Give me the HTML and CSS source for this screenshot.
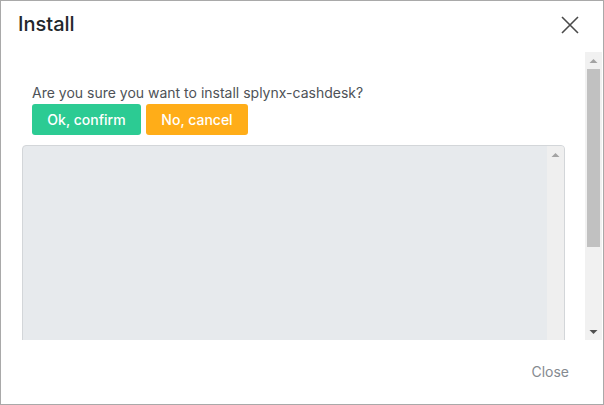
FILE: index.html
```html
<!DOCTYPE html>
<html>
<head>
<meta charset="utf-8">
<link rel="stylesheet" href="styles.css">
</head>
<body>
<div class="modal">
  <div class="modal-header">
    <h1 class="modal-title">Install</h1>
    <button class="close-x" aria-label="Close">
      <svg width="18" height="18" viewBox="0 0 18 18"><path d="M1 1 L17 17 M17 1 L1 17" stroke="#4a4a4a" stroke-width="1.6" fill="none"/></svg>
    </button>
  </div>
  <div class="modal-body">
    <div class="body-content">
      <div class="confirm">
        <p class="question">Are you sure you want to install splynx-cashdesk?</p>
        <div class="actions">
          <button class="btn btn-green">Ok, confirm</button>
          <button class="btn btn-orange">No, cancel</button>
        </div>
      </div>
      <div class="log">
        <div class="log-area"></div>
        <div class="vscroll vscroll-light">
          <div class="sb-btn"><svg width="9" height="6" viewBox="0 0 9 6"><path d="M0.5 5 L8.5 5 L4.5 1 Z" fill="#a3a3a3"/></svg></div>
          <div class="sb-track"></div>
        </div>
      </div>
    </div>
    <div class="vscroll">
      <div class="sb-btn"><svg width="9" height="6" viewBox="0 0 9 6"><path d="M0.5 5 L8.5 5 L4.5 1 Z" fill="#a3a3a3"/></svg></div>
      <div class="sb-track"><div class="sb-thumb"></div></div>
      <div class="sb-btn"><svg width="9" height="6" viewBox="0 0 9 6"><path d="M0.5 1 L8.5 1 L4.5 5 Z" fill="#505050"/></svg></div>
    </div>
  </div>
  <div class="modal-footer">
    <button class="btn-link">Close</button>
  </div>
</div>
</body>
</html>
```
FILE: styles.css
```css
html, body {
  margin: 0;
  padding: 0;
  height: 100%;
  background: #fff;
}
* { box-sizing: border-box; }
.modal {
  width: 604px;
  height: 405px;
  border: 1px solid #a9a9a9;
  display: flex;
  flex-direction: column;
  font-family: Inter, "Noto Sans", sans-serif;
  background: #fff;
}
.modal-header {
  height: 51px;
  flex: none;
  display: flex;
  align-items: flex-start;
  justify-content: space-between;
  padding: 11px 24px 0 17px;
}
.modal-title {
  margin: 0;
  font-size: 20px;
  font-weight: 500;
  color: #23272b;
  line-height: 24px;
}
.close-x {
  border: 0;
  background: none;
  padding: 0;
  margin-top: 4px;
  width: 18px;
  height: 18px;
  display: block;
}
.close-x svg { display: block; }
.modal-body {
  height: 288px;
  flex: none;
  display: flex;
  padding-right: 1px;
}
.body-content {
  flex: 1;
  min-width: 0;
  overflow: hidden;
  padding: 31px 20px 0 21px;
}
.confirm {
  padding-left: 10px;
}
.question {
  margin: 0;
  font-size: 14px;
  line-height: 20px;
  color: #4e5257;
}
.actions {
  display: flex;
  gap: 5px;
  margin-top: 1px;
}
.btn {
  border: 0;
  border-radius: 3px;
  height: 31px;
  padding: 0;
  white-space: nowrap;
  font-family: Inter, "Noto Sans", sans-serif;
  font-size: 14px;
  font-weight: 500;
  color: #fff;
}
.btn-green { background: #2ccb93; width: 109px; }
.btn-orange { background: #ffad18; width: 102px; }
.log {
  display: flex;
  height: 300px;
  margin-top: 10px;
  background: #e7eaed;
  border: 1px solid #d3d6d9;
  border-radius: 4px;
  overflow: hidden;
}
.log-area { flex: 1; }

/* drawn scrollbars */
.vscroll {
  width: 17px;
  flex: none;
  display: flex;
  flex-direction: column;
  background: #f1f1f1;
}
.vscroll-light { background: #efefef; }
.sb-btn {
  height: 17px;
  flex: none;
  display: flex;
  align-items: center;
  justify-content: center;
}
.sb-btn svg { display: block; }
.sb-track {
  flex: 1;
  padding: 0 2px;
}
.sb-thumb {
  height: 178px;
  background: #c1c1c1;
}
.modal-footer {
  flex: 1;
  display: flex;
  justify-content: flex-end;
  align-items: center;
  padding: 0 34px 0 0;
}
.btn-link {
  border: 0;
  background: none;
  padding: 0;
  font-family: Inter, "Noto Sans", sans-serif;
  font-size: 14px;
  color: #858a90;
  margin-top: -2px;
}
```
